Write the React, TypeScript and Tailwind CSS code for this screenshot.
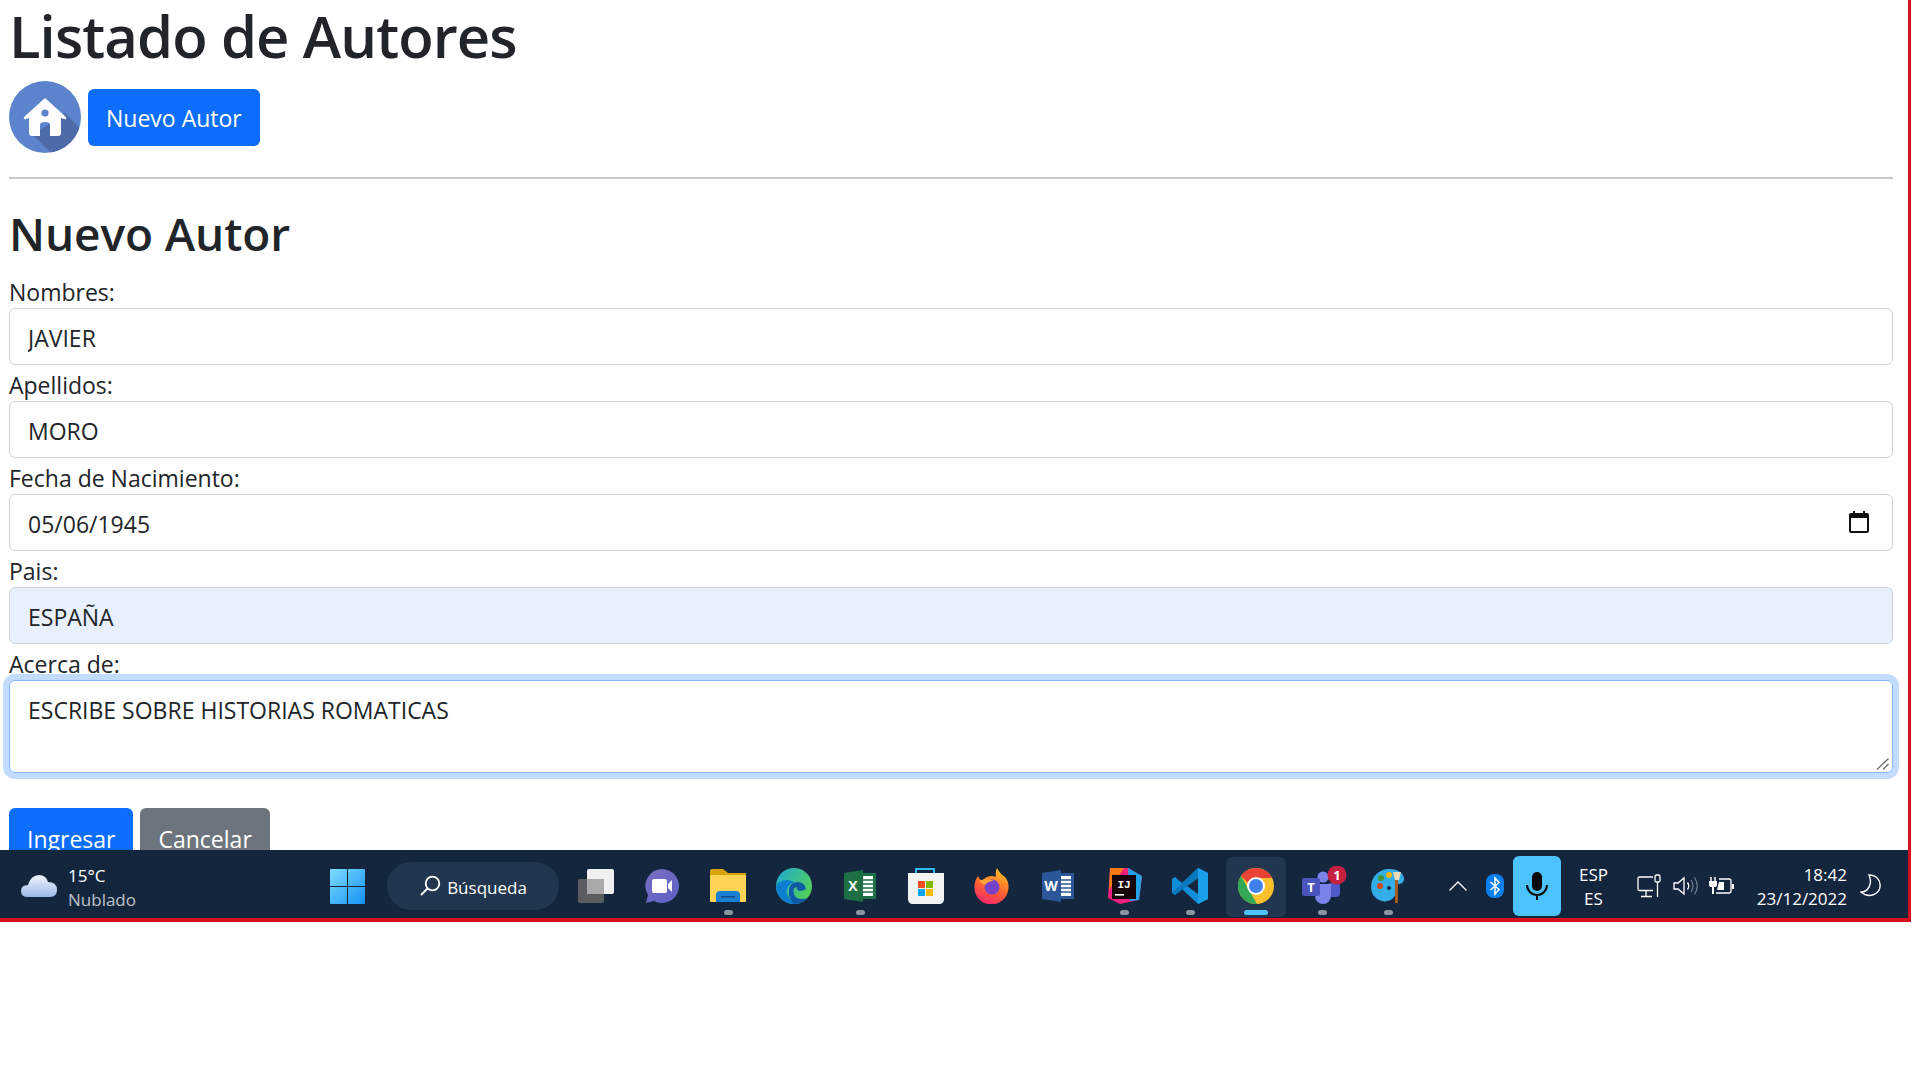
import type { ReactNode } from "react";

const fieldClass =
  "block w-full h-[57px] rounded-[6px] border border-[#ced4da] pt-[3px] px-[18px] text-[23px] leading-[36px] text-[#212529] outline-none";

const buttonClass = "h-[57px] rounded-[6px] px-[18px] text-[23px] text-white";

function HomeIcon() {
  return (
    <svg width="72" height="72" viewBox="0 0 72 72" className="shrink-0">
      <defs>
        <clipPath id="home-clip">
          <circle cx="36" cy="36" r="36" />
        </clipPath>
      </defs>
      <circle cx="36" cy="36" r="36" fill="#5c84cd" />
      <path d="M56 32 L80 56 L50 80 L24 54 Z" fill="#4c6ba8" clipPath="url(#home-clip)" />
      <path
        d="M36 17 L57 36 Q58 39 55 38 L52 37 V52 Q52 55 49 55 H41 V44 Q41 41 36 41 Q31 41 31 44 V55 H23 Q20 55 20 52 V37 L17 38 Q14 39 15 36 Z"
        fill="#fdfdff"
      />
      <circle cx="36" cy="32" r="3.6" fill="#5c84cd" />
    </svg>
  );
}

function Cloud() {
  return (
    <svg width="36" height="24" viewBox="0 0 36 24" className="shrink-0">
      <defs>
        <linearGradient id="cloud-g" x1="0" y1="0" x2="0" y2="1">
          <stop offset="0" stopColor="#f0f5fd" />
          <stop offset="1" stopColor="#9cb8e6" />
        </linearGradient>
      </defs>
      <path
        d="M7 23 Q0 23 0 17 Q0 11 7 11 Q10 1 18 1 Q25 1 27 8 Q36 8 36 16 Q36 23 29 23 Z"
        fill="url(#cloud-g)"
      />
    </svg>
  );
}

function WindowsLogo() {
  return (
    <svg width="35" height="35" viewBox="0 0 35 35" className="shrink-0">
      <defs>
        <linearGradient id="win-g" x1="0" y1="0" x2="1" y2="1">
          <stop offset="0" stopColor="#7fdcff" />
          <stop offset="1" stopColor="#1391f5" />
        </linearGradient>
      </defs>
      <path d="M1 0H17V17H0V1Q0 0 1 0ZM18 0H34Q35 0 35 1V17H18ZM0 18H17V35H1Q0 35 0 34ZM18 18H35V34Q35 35 34 35H18Z" fill="url(#win-g)" />
    </svg>
  );
}

function TaskView() {
  return (
    <svg width="36" height="34" viewBox="0 0 36 34">
      <rect x="0" y="10" width="26" height="24" rx="2" fill="#5a5c5f" />
      <rect x="9" y="0" width="27" height="25" rx="2" fill="#f0f0f0" />
      <rect x="9" y="10" width="17" height="15" fill="#a9a9a9" />
    </svg>
  );
}

function Chat() {
  return (
    <svg width="34" height="34" viewBox="0 0 34 34">
      <defs>
        <linearGradient id="chat-g" x1="0" y1="0" x2="1" y2="1">
          <stop offset="0" stopColor="#7b6fc0" />
          <stop offset="1" stopColor="#5a5fc8" />
        </linearGradient>
      </defs>
      <path d="M17 0A17 17 0 1 1 9 32L1 34L3 26A17 17 0 0 1 17 0Z" fill="url(#chat-g)" />
      <rect x="7" y="10" width="15" height="14" rx="2" fill="#fff" />
      <path d="M23 15L27 11V23L23 19Z" fill="#fff" />
    </svg>
  );
}

function Folder() {
  return (
    <svg width="36" height="34" viewBox="0 0 36 34">
      <path d="M0 2Q0 0 2 0H13L18 4H36V32H0Z" fill="#d9a20b" />
      <path d="M0 6H36V32Q36 33 35 33H1Q0 33 0 32Z" fill="#fcd353" />
      <path d="M6 33V26Q6 22 10 22H26Q30 22 30 26V33Z" fill="#1a7fd4" />
      <rect x="11" y="27" width="14" height="1.5" fill="#0d4d8a" />
    </svg>
  );
}

function Edge() {
  return (
    <svg width="36" height="36" viewBox="0 0 36 36">
      <defs>
        <linearGradient id="edge-g" x1="0" y1="0" x2="1" y2="0.6">
          <stop offset="0" stopColor="#1ba7d8" />
          <stop offset="1" stopColor="#55cf5a" />
        </linearGradient>
      </defs>
      <circle cx="18" cy="18" r="18" fill="url(#edge-g)" />
      <path d="M0 18A18 18 0 0 0 24 35Q14 34 11 26Q9 18 18 14Q11 10 4 14Q1 15 0 18Z" fill="#0c7fd0" />
      <path d="M13 22Q14 14 22 14Q29 15 30 21Q27 23 24 23Q20 22 21 19Q16 19 18 26Q20 33 32 30Q26 36 18 36Q12 30 13 22Z" fill="#0f5aa6" />
    </svg>
  );
}

function OfficeDoc({ letter, dark, light }: { letter: string; dark: string; light: string }) {
  return (
    <svg width="32" height="32" viewBox="0 0 32 32">
      <rect x="14" y="3" width="18" height="26" fill={light} />
      <rect x="17" y="6" width="12" height="20" fill="#fff" />
      <path d="M17.5 10H29M17.5 14H29M17.5 18H29M17.5 22H29" stroke={light} strokeWidth="1.4" />
      <path d="M0 3L19 0V32L0 29Z" fill={dark} />
      <text x="9" y="21" textAnchor="middle" fill="#fff" fontFamily="Open Sans" fontWeight="700" fontSize="14">
        {letter}
      </text>
    </svg>
  );
}

function Store() {
  return (
    <svg width="36" height="36" viewBox="0 0 36 36">
      <path d="M8 6V1H26V6" fill="none" stroke="#2fb8f0" strokeWidth="2" />
      <path d="M0 5H36V31Q36 36 31 36H5Q0 36 0 31Z" fill="#f3f3f3" />
      <rect x="10" y="13" width="7" height="7" fill="#f25022" />
      <rect x="18" y="13" width="7" height="7" fill="#7fba00" />
      <rect x="10" y="21" width="7" height="7" fill="#00a4ef" />
      <rect x="18" y="21" width="7" height="7" fill="#ffb900" />
    </svg>
  );
}

function Firefox() {
  return (
    <svg width="36" height="36" viewBox="0 0 36 36">
      <defs>
        <linearGradient id="ff-g" x1="0.7" y1="0" x2="0.3" y2="1">
          <stop offset="0" stopColor="#ffc327" />
          <stop offset="0.5" stopColor="#ff6a2b" />
          <stop offset="1" stopColor="#f0246f" />
        </linearGradient>
      </defs>
      <path d="M23 0Q26 6 31 9Q36 15 34 23A17 17 0 0 1 1 24Q-1 15 4 8Q5 11 8 13Q14 6 22 9Q21 4 23 0Z" fill="url(#ff-g)" />
      <circle cx="18" cy="19" r="7.5" fill="#7542c9" />
      <path d="M5 13Q13 9 20 13Q14 13 11 17Q8 16 5 13Z" fill="#ffa436" />
    </svg>
  );
}

function Intellij() {
  return (
    <svg width="36" height="36" viewBox="0 0 36 36">
      <path d="M4 0H22L36 8L33 32L14 36L2 30Z" fill="#f0217c" />
      <path d="M22 0L36 8L33 32L24 33Z" fill="#21a3e8" />
      <path d="M4 0H18L3 22Z" fill="#f97a12" />
      <rect x="6" y="7" width="24" height="24" fill="#160509" />
      <text x="18" y="20" textAnchor="middle" fill="#fff" fontFamily="Liberation Mono" fontWeight="700" fontSize="11">
        IJ
      </text>
      <rect x="9" y="26" width="9" height="1.6" fill="#fff" />
    </svg>
  );
}

function VsCode() {
  return (
    <svg width="36" height="36" viewBox="0 0 36 36">
      <path d="M26 0L36 5V31L26 36L10 21L3 27L0 25V11L3 9L10 15ZM26 10L15 18L26 26Z" fill="#0f8fd8" />
      <path d="M26 0L36 5V31L26 36Z" fill="#1aa0ea" />
      <path d="M0 25L26 0V10L3 27Z" fill="#0a78bf" />
    </svg>
  );
}

function Chrome() {
  return (
    <svg width="36" height="36" viewBox="0 0 36 36">
      <circle cx="18" cy="18" r="18" fill="#fbc02d" />
      <path d="M18 0A18 18 0 0 1 34 10H18A8 8 0 0 0 10 15L3 8A18 18 0 0 1 18 0Z" fill="#ea4335" />
      <path d="M3 8L11 22L19 36A18 18 0 0 1 3 8Z" fill="#34a853" />
      <circle cx="18" cy="18" r="9" fill="#fff" />
      <circle cx="18" cy="18" r="7" fill="#3f80ed" />
    </svg>
  );
}

function Teams() {
  return (
    <svg width="46" height="40" viewBox="0 0 46 40" className="ml-[6px]">
      <circle cx="21" cy="11" r="5.5" fill="#7b83eb" />
      <circle cx="32" cy="12" r="4" fill="#5059c9" />
      <rect x="25" y="17" width="13" height="14" rx="4" fill="#5059c9" />
      <path d="M13 18H29V30A8 8 0 0 1 13 30Z" fill="#7b83eb" />
      <rect x="0" y="12" width="18" height="18" rx="2" fill="#4b53bc" />
      <text x="9" y="26" textAnchor="middle" fill="#fff" fontFamily="Open Sans" fontWeight="700" fontSize="13">
        T
      </text>
      <circle cx="35" cy="9" r="9.5" fill="#c4203f" />
      <text x="35" y="14" textAnchor="middle" fill="#fff" fontFamily="Open Sans" fontWeight="700" fontSize="13">
        1
      </text>
    </svg>
  );
}

function Paint() {
  return (
    <svg width="36" height="36" viewBox="0 0 36 36">
      <path d="M17 1C28 0 35 6 34 12C33 17 28 15 26 18C24 22 27 25 24 29C20 35 9 35 4 28C-3 18 3 3 17 1Z" fill="#34aee8" />
      <circle cx="10" cy="18" r="3" fill="#cf4a18" />
      <circle cx="11" cy="10" r="3" fill="#3f9b3a" />
      <circle cx="19" cy="7" r="3" fill="#f5b70d" />
      <circle cx="19" cy="20" r="2" fill="#17344d" />
      <rect x="25" y="11" width="3" height="24" fill="#a65a1e" />
      <path d="M23 4H31L29 12H25Z" fill="#ecd9b8" />
    </svg>
  );
}

function Bluetooth() {
  return (
    <svg width="18" height="24" viewBox="0 0 18 24" className="shrink-0">
      <rect width="18" height="24" rx="8" fill="#0a7ff0" />
      <path d="M4.5 8L13 15.5L9 20V4L13 8.500L4.500 16" fill="none" stroke="#fff" strokeWidth="1.5" />
    </svg>
  );
}

function Mic() {
  return (
    <svg width="26" height="28" viewBox="0 0 26 28">
      <rect x="8" y="0" width="10" height="19" rx="5" fill="#0a0a0a" />
      <path d="M3 13A10 10 0 0 0 23 13M13 23V28" fill="none" stroke="#0a0a0a" strokeWidth="2" />
    </svg>
  );
}

function Monitor() {
  return (
    <svg width="25" height="24" viewBox="0 0 25 24" fill="none" stroke="#fff" strokeWidth="1.3" className="shrink-0">
      <path d="M16 3H2.500Q1 3 1 4.500V15Q1 16.500 2.500 16.500H16M9 16.500V22M4 22.500H15" />
      <rect x="18" y="1" width="5" height="7" rx="1.500" />
      <path d="M20.500 8V23" />
    </svg>
  );
}

function Speaker() {
  return (
    <svg width="25" height="22" viewBox="0 0 25 22" fill="none" stroke="#fff" strokeWidth="1.3" className="shrink-0">
      <path d="M1 8V14H5L11 19V3L5 8Z" />
      <path d="M14.500 7.500Q17 11 14.500 14.500" />
      <path d="M18 5Q22 11 18 17M21.500 2.500Q27 11 21.500 19.500" stroke="#6f7c8c" />
    </svg>
  );
}

function Battery() {
  return (
    <svg width="25" height="20" viewBox="0 0 25 20" className="shrink-0">
      <path d="M2 1V5M6 1V5" stroke="#fff" strokeWidth="1.500" />
      <path d="M0 5H8V9Q8 11 5 11V18H3V11Q0 11 0 9Z" fill="#fff" />
      <path d="M10 3H20Q22 3 22 5V15Q22 17 20 17H7" fill="none" stroke="#fff" strokeWidth="1.300" />
      <path d="M10 6H15V14H8Z" fill="#fff" />
      <rect x="23" y="8" width="2" height="5" fill="#fff" />
    </svg>
  );
}

function Moon() {
  return (
    <svg width="22" height="24" viewBox="0 0 22 24" fill="none" stroke="#fff" strokeWidth="1.4" className="shrink-0">
      <path d="M9 1C16 1 21 6 20 13C19 20 9 25 1 18C8 18 13 10 9 1Z" />
    </svg>
  );
}

function TaskSlot({
  children,
  dot,
  active,
}: {
  children: ReactNode;
  dot?: boolean;
  active?: boolean;
}) {
  return (
    <div className="relative flex h-[64px] w-[66px] shrink-0 items-center justify-center">
      {active && <div className="absolute top-[3px] left-[3px] h-[60px] w-[60px] rounded-[6px] bg-[#23364f]" />}
      <div className="relative flex items-center justify-center">{children}</div>
      {dot && <div className="absolute bottom-[3px] left-[29px] h-[5px] w-[9px] rounded-full bg-[#8a95a3]" />}
      {active && <div className="absolute bottom-[3px] left-[21px] h-[5px] w-[24px] rounded-full bg-[#4cc2ff]" />}
    </div>
  );
}

function Field({ label, children }: { label: string; children: ReactNode }) {
  return (
    <div>
      <label className="block h-[36px] text-[23px] leading-[40px] text-[#212529]">{label}</label>
      {children}
    </div>
  );
}

function Taskbar() {
  return (
    <div className="flex h-[68px] shrink-0 items-center bg-[#14263e] pt-[4px] text-white">
      <div className="flex w-[330px] shrink-0 items-center pl-[21px]">
        <Cloud />
        <div className="ml-[11px] pt-[3px] text-[17px] leading-[24px]">
          <div>15°C</div>
          <div className="text-[#bcc3cb]">Nublado</div>
        </div>
      </div>
      <WindowsLogo />
      <div className="ml-[22px] flex h-[48px] w-[172px] shrink-0 items-center justify-center gap-[6px] rounded-full bg-[#23364f] text-[17px]">
        <svg width="22" height="22" viewBox="0 0 22 22" fill="none" stroke="#fff" strokeWidth="1.800">
          <circle cx="13.500" cy="8.500" r="6.800" />
          <path d="M8.500 13.500L2 20" />
        </svg>
        <span className="pt-[3px]">Búsqueda</span>
      </div>
      <div className="ml-[4px] flex">
        <TaskSlot><TaskView /></TaskSlot>
        <TaskSlot><Chat /></TaskSlot>
        <TaskSlot dot><Folder /></TaskSlot>
        <TaskSlot><Edge /></TaskSlot>
        <TaskSlot dot><OfficeDoc letter="X" dark="#1d7044" light="#1d7044" /></TaskSlot>
        <TaskSlot><Store /></TaskSlot>
        <TaskSlot><Firefox /></TaskSlot>
        <TaskSlot><OfficeDoc letter="W" dark="#2b579a" light="#2b579a" /></TaskSlot>
        <TaskSlot dot><Intellij /></TaskSlot>
        <TaskSlot dot><VsCode /></TaskSlot>
        <TaskSlot active><Chrome /></TaskSlot>
        <TaskSlot dot><Teams /></TaskSlot>
        <TaskSlot dot><Paint /></TaskSlot>
      </div>
      <svg width="18" height="10" viewBox="0 0 18 10" fill="none" stroke="#fff" strokeWidth="1.300" className="ml-[28px] shrink-0">
        <path d="M0.500 9.500L9 1L17.500 9.500" />
      </svg>
      <div className="ml-[19px]"><Bluetooth /></div>
      <div className="ml-[9px] flex h-[60px] w-[48px] shrink-0 items-center justify-center rounded-[6px] bg-[#4cc2ff]">
        <Mic />
      </div>
      <div className="w-[65px] shrink-0 pt-[2px] text-center text-[17px] leading-[24px]">
        <div>ESP</div>
        <div>ES</div>
      </div>
      <div className="ml-[11px] flex items-center gap-[11px]">
        <Monitor />
        <Speaker />
        <Battery />
      </div>
      <div className="ml-auto pt-[1px] text-right text-[17px] leading-[24px]">
        <div>18:42</div>
        <div>23/12/2022</div>
      </div>
      <div className="mr-[26px] ml-[13px]"><Moon /></div>
    </div>
  );
}

export default function App() {
  return (
    <div className="h-screen bg-white font-['Open_Sans',sans-serif]">
      <div className="flex h-[922px] w-[1911px] flex-col border-r-[3px] border-b-[4px] border-[#d5101f]">
        <div className="min-h-0 flex-1 overflow-hidden pr-[15px] pl-[9px]">
          <h1 className="text-[58px] leading-[72px] font-semibold tracking-[-0.9px] text-[#212529]">Listado de Autores</h1>
          <div className="mt-[9px] flex items-center gap-[7px]">
            <HomeIcon />
            <button className={`${buttonClass} bg-[#0d6efd] pt-[2px]`}>Nuevo Autor</button>
          </div>
          <hr className="mt-[24px] border-t-2 border-[#c8c8c8]" />
          <h2 className="mt-[25px] text-[46px] leading-[58px] font-semibold tracking-[-0.1px] text-[#212529]">Nuevo Autor</h2>
          <div className="mt-[10px] flex flex-col">
            <Field label="Nombres:">
              <input readOnly value="JAVIER" className={fieldClass} />
            </Field>
            <Field label="Apellidos:">
              <input readOnly value="MORO" className={fieldClass} />
            </Field>
            <Field label="Fecha de Nacimiento:">
              <div className="relative">
                <input readOnly value="05/06/1945" className={fieldClass} />
                <svg width="20" height="22" viewBox="0 0 20 22" className="absolute top-[17px] right-[24px]">
                  <path d="M4 0H6V2H14V0H16V2H18Q20 2 20 4V20Q20 22 18 22H2Q0 22 0 20V4Q0 2 2 2H4ZM2 7V20H18V7Z" fill="#111" />
                </svg>
              </div>
            </Field>
            <Field label="Pais:">
              <input readOnly value="ESPAÑA" className={`${fieldClass} bg-[#e8f0fe]`} />
            </Field>
            <Field label="Acerca de:">
              <div className="relative">
                <textarea
                  readOnly
                  value="ESCRIBE SOBRE HISTORIAS ROMATICAS"
                  className="block h-[93px] w-full resize-none rounded-[6px] border border-[#86b7fe] px-[18px] pt-[11px] pb-[7px] text-[23px] leading-[36px] text-[#212529] shadow-[0_0_0_6px_#c2dbfe] outline-none"
                />
                <svg width="13" height="12" viewBox="0 0 13 12" className="absolute right-[4px] bottom-[3px]" stroke="#666" strokeWidth="1.200">
                  <path d="M1 11.500L12.500 0.500M7 11.500L12.500 6" />
                </svg>
              </div>
            </Field>
          </div>
          <div className="mt-[35px] flex gap-[7px]">
            <button className={`${buttonClass} bg-[#0d6efd] pt-[5px]`}>Ingresar</button>
            <button className={`${buttonClass} bg-[#6c757d] pt-[5px]`}>Cancelar</button>
          </div>
        </div>
        <Taskbar />
      </div>
    </div>
  );
}
